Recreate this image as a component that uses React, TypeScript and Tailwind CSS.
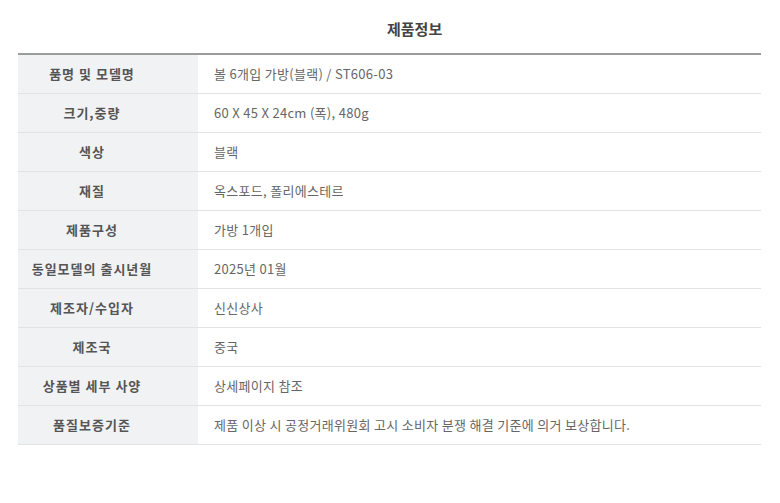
const rows: [string, string][] = [
  ["품명 및 모델명", "볼 6개입 가방(블랙) / ST606-03"],
  ["크기,중량", "60 X 45 X 24cm (폭), 480g"],
  ["색상", "블랙"],
  ["재질", "옥스포드, 폴리에스테르"],
  ["제품구성", "가방 1개입"],
  ["동일모델의 출시년월", "2025년 01월"],
  ["제조자/수입자", "신신상사"],
  ["제조국", "중국"],
  ["상품별 세부 사양", "상세페이지 참조"],
  ["품질보증기준", "제품 이상 시 공정거래위원회 고시 소비자 분쟁 해결 기준에 의거 보상합니다."],
]

export default function App() {
  return (
    <div
      className="min-h-screen w-full bg-white px-[18px] pt-[19px] text-[#555]"
      style={{ fontFamily: '"Noto Sans CJK KR", "Noto Sans", sans-serif' }}
    >
      <div className="w-[743px]">
        <h2 className="pl-[369px] text-[15px] font-bold leading-[20px] text-[#444]">제품정보</h2>
        <table className="mt-[14px] w-full border-collapse border-t-2 border-[#9a9c9a] text-[13px]">
          <tbody>
            {rows.map(([label, value]) => (
              <tr key={label} className="h-[39px] border-b border-[#e3e3e3]">
                <th className="w-[180px] bg-[#f1f2f4] pr-[32px] text-center font-bold tracking-[1px] text-[#555]">
                  {label}
                </th>
                <td className="pl-[16px] tracking-[0.3px] text-[#666]">{value}</td>
              </tr>
            ))}
          </tbody>
        </table>
      </div>
    </div>
  )
}
